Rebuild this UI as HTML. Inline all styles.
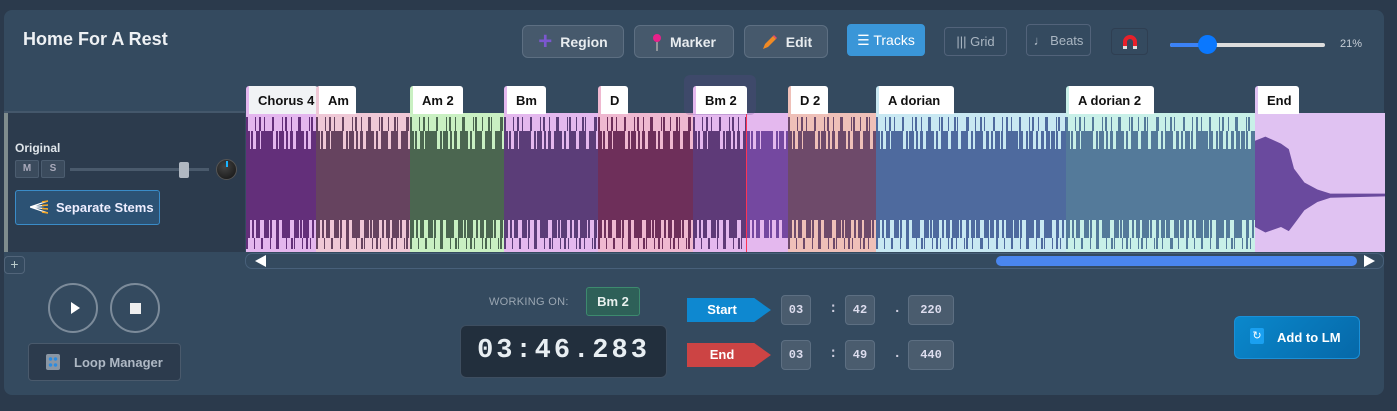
<!DOCTYPE html>
<html><head><meta charset="utf-8">
<style>
*{box-sizing:border-box;margin:0;padding:0}
body{width:1397px;height:411px;background:#2b3a4c;font-family:"Liberation Sans",sans-serif;position:relative;overflow:hidden;color:#fff}
.abs{position:absolute}
.panel{left:4px;top:10px;width:1380px;height:385px;background:#344a5f;border-radius:8px}
.btn{position:absolute;top:25px;height:33px;border:1px solid #5d6f82;background:#46596c;border-radius:6px;color:#e8ecef;font-weight:bold;font-size:14px;display:flex;align-items:center;justify-content:center;gap:8px}
.tb{position:absolute;top:27px;height:29px;border:1px solid #52637a;border-radius:4px;color:#aab6c2;font-size:13px;display:flex;align-items:center;justify-content:center}
.lbl{position:absolute;top:86px;height:28px;background:#fff;color:#111;font-weight:bold;font-size:13px;display:flex;align-items:center;padding-left:9px;border-radius:3px 3px 0 0;border-left:3px solid}
.reg{position:absolute;top:113px;height:139px}
.reg .d{position:absolute;left:0;right:0;top:36px;bottom:32px;background:var(--c)}
.reg .s0,.reg .s1,.reg .s2,.reg .s3{position:absolute;left:0;right:0}
.reg .s0{top:4px;height:14px;background:repeating-linear-gradient(90deg,var(--c) 0 1px,transparent 1px 9px),repeating-linear-gradient(90deg,var(--c) 0 2px,transparent 2px 13px)}
.reg .s1{top:18px;height:18px;background:repeating-linear-gradient(90deg,var(--c) 0 2px,transparent 2px 5px),repeating-linear-gradient(90deg,var(--c) 0 3px,transparent 3px 11px),repeating-linear-gradient(90deg,var(--c) 0 4px,transparent 4px 17px)}
.reg .s2{bottom:14px;height:18px;background:repeating-linear-gradient(90deg,var(--c) 0 2px,transparent 2px 6px),repeating-linear-gradient(90deg,var(--c) 0 3px,transparent 3px 10px),repeating-linear-gradient(90deg,var(--c) 0 4px,transparent 4px 19px)}
.reg .s3{bottom:3px;height:11px;background:repeating-linear-gradient(90deg,var(--c) 0 1px,transparent 1px 8px),repeating-linear-gradient(90deg,var(--c) 0 2px,transparent 2px 15px)}
.tbox{position:absolute;width:30px;height:30px;border:1px solid #5d6f82;background:#4a5c6e;border-radius:4px;color:#dde;font-family:"Liberation Mono",monospace;font-weight:bold;font-size:12px;display:flex;align-items:center;justify-content:center}
.sep{position:absolute;color:#ccd;font-family:"Liberation Mono",monospace;font-weight:bold;font-size:14px}
</style></head><body>
<div class="abs panel"></div>
<div class="abs" style="left:23px;top:29px;font-size:18px;font-weight:bold;color:#eef1f4">Home For A Rest</div>

<div class="btn" style="left:522px;width:102px"><span style="color:#7b57cf;font-size:24px;line-height:1;font-weight:bold">+</span>Region</div>
<div class="btn" style="left:634px;width:100px"><svg width="10" height="18"><circle cx="5" cy="5" r="4" fill="#e8208a"/><line x1="5" y1="9" x2="5" y2="18" stroke="#aaa" stroke-width="1.5"/></svg>Marker</div>
<div class="btn" style="left:744px;width:84px"><svg width="18" height="18"><path d="M3 16 L5 11 L13 3 L16 6 L8 14 Z" fill="#f08a24"/><path d="M13 3 L16 6 L17 5 L14 2Z" fill="#e84a6a"/></svg>Edit</div>
<div class="tb" style="left:847px;top:24px;height:32px;width:78px;background:#3a96d8;border-color:#3a96d8;color:#fff;font-size:14px">☰ Tracks</div>
<div class="tb" style="left:944px;width:63px">||| Grid</div>
<div class="tb" style="left:1026px;top:24px;height:32px;width:65px">♩&nbsp;Beats</div>
<div class="tb" style="left:1111px;top:28px;height:27px;width:37px;border-color:#2f3f52"><svg width="14" height="14"><path d="M2 13 V7 A5 5 0 0 1 12 7 V13" fill="none" stroke="#e8202a" stroke-width="4"/><rect x="0" y="11" width="4" height="3" fill="#ddd"/><rect x="10" y="11" width="4" height="3" fill="#ddd"/></svg></div>
<div class="abs" style="left:1170px;top:43px;width:155px;height:4px;background:#ddd;border-radius:2px"></div>
<div class="abs" style="left:1170px;top:43px;width:38px;height:4px;background:#3b82f6;border-radius:2px"></div>
<div class="abs" style="left:1198px;top:35px;width:19px;height:19px;background:#0a78ff;border-radius:50%"></div>
<div class="abs" style="left:1340px;top:38px;font-size:11px;color:#c6ced6">21%</div>

<div class="abs" style="left:4px;top:111px;width:241px;height:2px;background:#44576b"></div>
<div class="abs" style="left:5px;top:113px;width:240px;height:139px;background:#2c3b4d"></div>
<div class="abs" style="left:4px;top:113px;width:4px;height:139px;background:#7f8c8d"></div>
<div class="abs" style="left:15px;top:141px;font-size:12px;font-weight:bold;color:#dfe5ea">Original</div>
<div class="abs" style="left:15px;top:160px;width:24px;height:18px;border:1px solid #4c5d70;background:#3b4b5d;border-radius:2px;font-size:10px;font-weight:bold;color:#aab;text-align:center;line-height:16px">M</div>
<div class="abs" style="left:41px;top:160px;width:24px;height:18px;border:1px solid #4c5d70;background:#3b4b5d;border-radius:2px;font-size:10px;font-weight:bold;color:#aab;text-align:center;line-height:16px">S</div>
<div class="abs" style="left:70px;top:168px;width:139px;height:3px;background:#4a5a6c"></div>
<div class="abs" style="left:179px;top:162px;width:10px;height:16px;background:#b0b8c2;border-radius:2px"></div>
<div class="abs" style="left:216px;top:159px;width:21px;height:21px;background:radial-gradient(circle at 40% 35%,#444,#111);border-radius:50%;border:1px solid #555"></div>
<div class="abs" style="left:226px;top:161px;width:1.5px;height:6px;background:#19b4ff"></div>
<div class="abs" style="left:15px;top:190px;width:145px;height:35px;border:1px solid #3a8cc8;background:#2c5274;border-radius:3px;font-size:13px;font-weight:bold;color:#eef;display:flex;align-items:center;padding-left:40px">Separate Stems</div>
<svg class="abs" style="left:30px;top:200px" width="18" height="14"><path d="M0 7 L18 1 M0 7 L18 5 M0 7 L18 9 M0 7 L18 13" stroke="#fff" stroke-width="1.2"/><path d="M12 2 L18 1 M12 5.5 L18 5 M12 8.5 L18 9 M12 12 L18 13" stroke="#f5a623" stroke-width="1.5"/></svg>

<div class="reg" style="left:246px;width:70px;background:#e4b6ee;--c:#632f7a"><div class="s0"></div><div class="s1"></div><div class="d"></div><div class="s2"></div><div class="s3"></div></div>
<div class="reg" style="left:316px;width:94px;background:#efc8d6;--c:#66435f"><div class="s0"></div><div class="s1"></div><div class="d"></div><div class="s2"></div><div class="s3"></div></div>
<div class="reg" style="left:410px;width:94px;background:#c9f0c2;--c:#4b6650"><div class="s0"></div><div class="s1"></div><div class="d"></div><div class="s2"></div><div class="s3"></div></div>
<div class="reg" style="left:504px;width:94px;background:#e4b8ee;--c:#5b3d78"><div class="s0"></div><div class="s1"></div><div class="d"></div><div class="s2"></div><div class="s3"></div></div>
<div class="reg" style="left:598px;width:95px;background:#efb8d0;--c:#6e2f5a"><div class="s0"></div><div class="s1"></div><div class="d"></div><div class="s2"></div><div class="s3"></div></div>
<div class="reg" style="left:693px;width:53px;background:#e4b8ee;--c:#5e3a78"><div class="s0"></div><div class="s1"></div><div class="d"></div><div class="s2"></div><div class="s3"></div></div>
<div class="reg" style="left:746px;width:42px;background:#e4b8ee;--c:#7448a0"><div class="s1"></div><div class="d"></div><div class="s2"></div></div>
<div class="reg" style="left:788px;width:88px;background:#efc0b8;--c:#6e4a6a"><div class="s0"></div><div class="s1"></div><div class="d"></div><div class="s2"></div><div class="s3"></div></div>
<div class="reg" style="left:876px;width:190px;background:#c8e8f2;--c:#4e6a9e"><div class="s0"></div><div class="s1"></div><div class="d"></div><div class="s2"></div><div class="s3"></div></div>
<div class="reg" style="left:1066px;width:189px;background:#c8f0e8;--c:#547a9a"><div class="s0"></div><div class="s1"></div><div class="d"></div><div class="s2"></div><div class="s3"></div></div>
<div class="reg" style="left:1255px;width:130px;background:#e0c2f2"><div class="abs" style="left:0;top:0;width:130px;height:139px;background:#6a4a9e;clip-path:polygon(0 20%,8% 17%,20% 22%,26% 26%,30% 40%,38% 50%,48% 55%,58% 58%,100% 58%,100% 60%,58% 61%,48% 64%,38% 70%,30% 80%,26% 85%,20% 82%,8% 86%,0 82%)"></div></div>
<div class="abs" style="left:746px;top:113px;width:1px;height:139px;background:#ff3355"></div>
<div class="abs" style="left:684px;top:75px;width:72px;height:40px;background:rgba(90,70,140,.25);border-radius:6px"></div>

<div class="lbl" style="left:246px;width:72px;border-color:#e4b6ee;background:#f1f3f5">Chorus 4</div>
<div class="lbl" style="left:316px;width:40px;border-color:#efc8d6">Am</div>
<div class="lbl" style="left:410px;width:53px;border-color:#c9f0c2">Am 2</div>
<div class="lbl" style="left:504px;width:42px;border-color:#e4b8ee">Bm</div>
<div class="lbl" style="left:598px;width:30px;border-color:#efb8d0">D</div>
<div class="lbl" style="left:693px;width:54px;border-color:#e4b8ee">Bm 2</div>
<div class="lbl" style="left:788px;width:40px;border-color:#efc0b8">D 2</div>
<div class="lbl" style="left:876px;width:78px;border-color:#c8e8f2">A dorian</div>
<div class="lbl" style="left:1066px;width:88px;border-color:#c8f0e8">A dorian 2</div>
<div class="lbl" style="left:1255px;width:44px;border-color:#e0c2f2">End</div>

<div class="abs" style="left:4px;top:256px;width:21px;height:18px;border:1px solid #52657a;border-radius:4px;color:#bcc;font-size:14px;text-align:center;line-height:15px">+</div>
<div class="abs" style="left:245px;top:253px;width:1139px;height:16px;border:1px solid #48607a;border-radius:7px"></div>
<div class="abs" style="left:255px;top:255px;width:0;height:0;border-top:6px solid transparent;border-bottom:6px solid transparent;border-right:11px solid #fff"></div>
<div class="abs" style="left:996px;top:256px;width:361px;height:10px;background:#4a86ef;border-radius:5px"></div>
<div class="abs" style="left:1364px;top:255px;width:0;height:0;border-top:6px solid transparent;border-bottom:6px solid transparent;border-left:11px solid #fff"></div>

<div class="abs" style="left:48px;top:283px;width:50px;height:50px;border:2px solid #7c8b9a;border-radius:50%"></div>
<div class="abs" style="left:71px;top:302px;width:0;height:0;border-top:6px solid transparent;border-bottom:6px solid transparent;border-left:9px solid #fff"></div>
<div class="abs" style="left:110px;top:283px;width:50px;height:50px;border:2px solid #7c8b9a;border-radius:50%"></div>
<div class="abs" style="left:130px;top:303px;width:11px;height:11px;background:#eee"></div>
<div class="abs" style="left:28px;top:343px;width:153px;height:38px;border:1px solid #4a5a6c;background:#2c3b4d;border-radius:4px;font-size:13px;font-weight:bold;color:#aeb8c4;display:flex;align-items:center;padding-left:45px">Loop Manager</div>
<div class="abs" style="left:46px;top:354px;width:14px;height:16px;background:#8a96a4;border-radius:2px"></div>
<div class="abs" style="left:48px;top:356px;width:10px;height:12px;background:radial-gradient(circle,#2c8ce0 1.5px,transparent 2px) 0 0/5px 6px"></div>

<div class="abs" style="left:489px;top:296px;font-size:11px;color:#9aa6b2;letter-spacing:.3px">WORKING ON:</div>
<div class="abs" style="left:586px;top:287px;width:54px;height:29px;background:#2e6058;border:1px solid #3d8a6e;border-radius:3px;font-size:13px;font-weight:bold;color:#e8f0ee;text-align:center;line-height:27px">Bm 2</div>
<div class="abs" style="left:460px;top:325px;width:207px;height:53px;background:#222f3d;border:1px solid #3e4e60;border-radius:6px;font-family:'Liberation Mono',monospace;font-size:27px;font-weight:bold;color:#e8eef2;text-align:center;line-height:51px;letter-spacing:3px">03:46.283</div>

<div class="abs" style="left:687px;top:298px;width:84px;height:24px;background:#0e88d0;clip-path:polygon(0 0,80% 0,100% 50%,80% 100%,0 100%);font-size:13px;font-weight:bold;text-align:center;line-height:24px;padding-right:14px">Start</div>
<div class="abs" style="left:687px;top:343px;width:84px;height:24px;background:#cc4444;clip-path:polygon(0 0,80% 0,100% 50%,80% 100%,0 100%);font-size:13px;font-weight:bold;text-align:center;line-height:24px;padding-right:14px">End</div>
<div class="tbox" style="left:781px;top:295px">03</div><div class="sep" style="left:829px;top:301px">:</div>
<div class="tbox" style="left:845px;top:295px">42</div><div class="sep" style="left:893px;top:301px">.</div>
<div class="tbox" style="left:908px;top:295px;width:46px">220</div>
<div class="tbox" style="left:781px;top:340px">03</div><div class="sep" style="left:829px;top:346px">:</div>
<div class="tbox" style="left:845px;top:340px">49</div><div class="sep" style="left:893px;top:346px">.</div>
<div class="tbox" style="left:908px;top:340px;width:46px">440</div>

<div class="abs" style="left:1234px;top:316px;width:126px;height:43px;background:linear-gradient(135deg,#0a88cc,#0668a8);border:1px solid #1a90d8;border-radius:6px;font-size:13px;font-weight:bold;color:#fff;display:flex;align-items:center;padding-left:42px">Add to LM</div>
<div class="abs" style="left:1250px;top:328px;width:14px;height:16px;background:#1aa0f0;border-radius:2px;color:#fff;font-size:11px;text-align:center;line-height:16px">↻</div>
</body></html>
